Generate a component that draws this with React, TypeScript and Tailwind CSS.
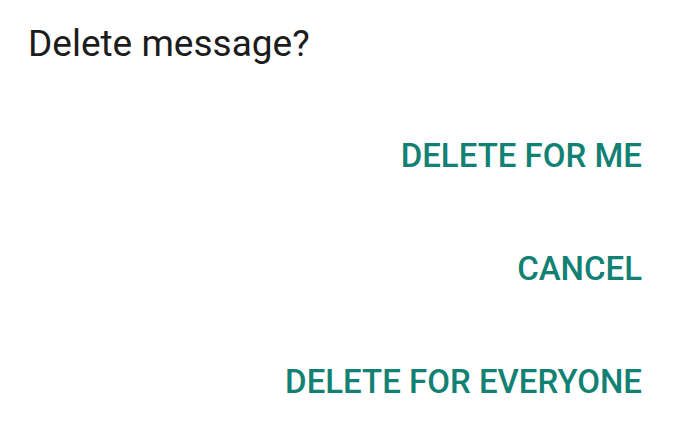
import React from "react";

const DeleteDialog = () => {
  const actions = ["DELETE FOR ME", "CANCEL", "DELETE FOR EVERYONE"];

  return (
    <div className="flex flex-col w-[680px] h-[422px] overflow-hidden bg-white pt-[25px] font-['Roboto',sans-serif]">
      <span className="block pl-[28px] text-[37px] leading-[37px] text-[#1c1c1c]">
        Delete message?
      </span>
      <div className="flex flex-col items-end gap-[80px] mt-[77px] pr-[38px]">
        {actions.map((label) => (
          <button
            key={label}
            className="text-[33px] leading-[33px] font-medium text-[#108173]"
          >
            {label}
          </button>
        ))}
      </div>
    </div>
  );
};

export default DeleteDialog;
